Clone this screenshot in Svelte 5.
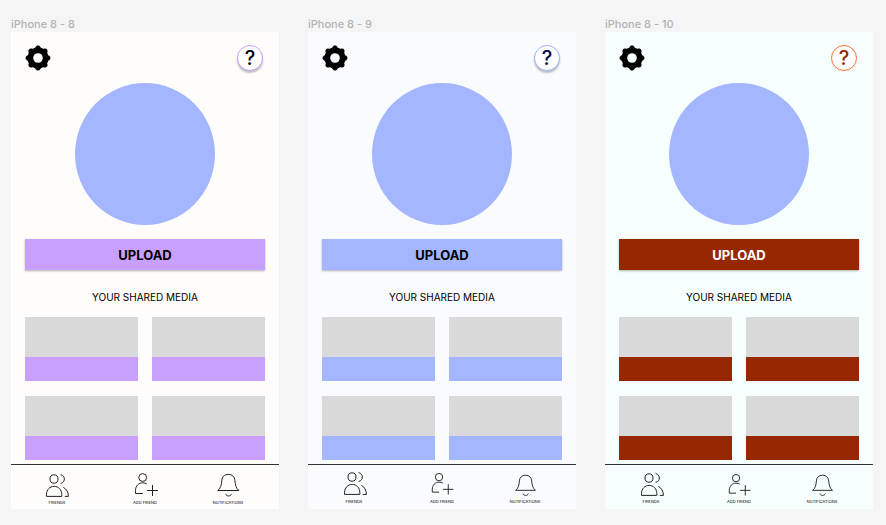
<script>
  const screens = [
    { name: 'iPhone 8 - 8', theme: 'lilac', shifts: [[0, 0, 1], [0, 0, 1], [0, 0, 1]] },
    { name: 'iPhone 8 - 9', theme: 'sky', shifts: [[1, -2, 1], [0, 0, 0.94], [1, 1, 0.94]] },
    { name: 'iPhone 8 - 10', theme: 'rust', shifts: [[1, -1, 1], [0, 1, 0.94], [1, 1, 0.94]] }
  ];

  const tabs = [
    {
      label: 'FRIENDS',
      path: 'M14 8a4 4.2 0 1 1-8 0a4 4.2 0 1 1 8 0zM16.6 3.7c5 .6 5 8 0 8.7M2.5 25.4v-2c0-4.6 3.4-8 7.7-8s7.6 3.4 7.6 8v2zM19.4 16.4c3 1.6 5 4.6 5 9h-3.6'
    },
    {
      label: 'ADD FRIEND',
      path: 'M14.6 6.5a3.9 3.9 0 1 1-7.8 0a3.9 3.9 0 1 1 7.8 0zM10.8 22.5H3.5v-3c0-4.5 3.2-7.7 7.2-7.7c1.6 0 3 .4 4 1.1M20.5 14v11M15 19.5h11'
    },
    {
      label: 'NOTIFICATIONS',
      path: 'M2.8 19.5C5.5 17.5 6.5 14 6.8 9.5C7 5.6 9.5 3.4 13.3 3.4s6.3 2.2 6.6 6.1c.3 4.5 1.3 8 4 10zM10.6 22.9c.5 2.7 5.2 2.7 5.7 0'
    }
  ];

  const teeth = [0, 45, 90, 135, 180, 225, 270, 315];
</script>

<main>
  {#each screens as screen}
    <section class="screen">
      <h2>{screen.name}</h2>
      <div class="phone {screen.theme}">
        <div class="content">
          <header>
            <button class="settings" aria-label="Settings">
              <svg viewBox="-13 -13 26 26" aria-hidden="true">
                <circle r="10.4" />
                {#each teeth as angle (angle)}
                  <path
                    d="M-4.6 -9.2C-3 -9.8 -2.6 -10.4 -2.2 -11.2C-1.5 -12.9 1.5 -12.9 2.2 -11.2C2.6 -10.4 3 -9.8 4.6 -9.2z"
                    transform="rotate({angle})"
                  />
                {/each}
                <circle class="hole" r="4.8" />
              </svg>
            </button>
            <button class="help" aria-label="Help">?</button>
          </header>
          <div class="avatar"></div>
          <button class="upload">UPLOAD</button>
          <h3>YOUR SHARED MEDIA</h3>
          <div class="media">
            {#each [1, 2, 3, 4] as item (item)}
              <div class="card"><div class="caption"></div></div>
            {/each}
          </div>
        </div>
        <nav>
          {#each tabs as tab, i}
            {@const [x, y, scale] = screen.shifts[i]}
            <a href="#{tab.label.toLowerCase().replace(' ', '-')}">
              <svg viewBox="0 0 26 26" aria-hidden="true">
                <path d={tab.path} transform="translate({x} {y}) scale({scale})" />
              </svg>
              <span>{tab.label}</span>
            </a>
          {/each}
        </nav>
      </div>
    </section>
  {/each}
</main>

<style>
  :global(body) {
    margin: 0;
    background: #f5f5f5;
  }

  main {
    display: grid;
    grid-template-columns: repeat(3, 1fr);
    gap: 29px;
    padding: 16px 13px 16px 11px;
    font-family: Inter, 'Liberation Sans', sans-serif;
    color: #000;
  }

  .screen {
    display: flex;
    flex-direction: column;
  }

  h2 {
    margin: 0;
    font-size: 11px;
    line-height: 16px;
    font-weight: 500;
    color: #b3b3b3;
  }

  .phone {
    flex: 1;
    background: var(--surface);
  }

  .lilac {
    --surface: #fffdfc;
    --accent: #c9a0ff;
    --ring: #c9a0ff;
    --mark: #000;
    --on-accent: #000;
    --lift: 0 2px 2px rgba(0, 0, 0, 0.25);
    --label-gap: 3px;
  }

  .sky {
    --surface: #fafbff;
    --accent: #a3b6ff;
    --ring: #a3b6ff;
    --mark: #04044a;
    --on-accent: #000;
    --lift: 0 2px 2px rgba(0, 0, 0, 0.25);
    --label-gap: 2px;
  }

  .rust {
    --surface: #f6fffd;
    --accent: #972700;
    --ring: #ff7036;
    --mark: #972700;
    --on-accent: #fff;
    --lift: none;
    --label-gap: 2px;
  }

  .content {
    padding: 13px 14px 4px;
  }

  button {
    font-family: inherit;
    padding: 0;
    border: 0;
    cursor: pointer;
  }

  header {
    display: flex;
    justify-content: space-between;
    padding-right: 2px;
  }

  .settings {
    width: 26px;
    height: 26px;
    background: none;
  }

  .settings svg {
    display: block;
    width: 26px;
    height: 26px;
  }

  .hole {
    fill: var(--surface);
  }

  .help {
    width: 26px;
    height: 26px;
    border: 1px solid var(--ring);
    border-radius: 50%;
    background: #fff;
    box-shadow: var(--lift);
    color: var(--mark);
    font-size: 20px;
    line-height: 24px;
    font-weight: 500;
  }

  .avatar {
    width: 140px;
    height: 142px;
    margin: 12px auto 14px;
    border-radius: 50%;
    background: #a3b6ff;
  }

  .upload {
    display: block;
    width: 100%;
    height: 31px;
    background: var(--accent);
    box-shadow: 0 1px 2px rgba(0, 0, 0, 0.3);
    color: var(--on-accent);
    font-size: 13px;
    font-weight: 700;
  }

  h3 {
    margin: 21px 0 13px;
    font-size: 10px;
    line-height: 13px;
    font-weight: 400;
    text-align: center;
  }

  .media {
    display: grid;
    grid-template-columns: 1fr 1fr;
    gap: 15px 14px;
  }

  .card {
    padding-top: 40px;
    background: #d9d9d9;
  }

  .caption {
    height: 24px;
    background: var(--accent);
  }

  nav {
    display: grid;
    grid-template-columns: 92fr 84fr 82fr;
    padding: 6px 10px 3px 0;
    border-top: 1px solid #333;
  }

  nav a {
    display: flex;
    flex-direction: column;
    align-items: center;
    gap: var(--label-gap);
    color: #000;
    text-decoration: none;
    font-size: 4px;
    line-height: 6px;
  }

  nav svg {
    width: 26px;
    height: 26px;
    fill: none;
    stroke: #222;
    stroke-width: 1;
    overflow: visible;
  }
</style>
